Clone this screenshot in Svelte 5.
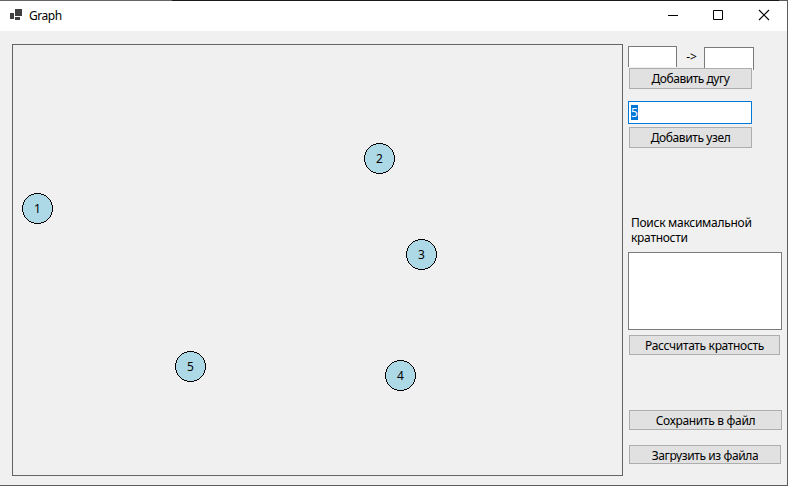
<script>
  const nodes = [
    { id: 1, x: 9, y: 148 },
    { id: 2, x: 351, y: 98 },
    { id: 3, x: 393, y: 194 },
    { id: 4, x: 372, y: 315 },
    { id: 5, x: 162, y: 306 }
  ];
</script>

<div class="window">
  <header>
    <svg class="logo" width="13" height="12" viewBox="0 0 13 12" shape-rendering="crispEdges" fill="#3f3f3f">
      <path d="M5 0h7v7H5zM0 4h4v6H0zM5 8h5v3H5z" />
    </svg>
    <span class="title">Graph</span>
    <div class="controls">
      <svg width="46" height="29" viewBox="0 0 46 29"><path d="M18 14.5h10" stroke="#000" /></svg>
      <svg width="46" height="29" viewBox="0 0 46 29"><path d="M17.5 9.5h9v9h-9z" fill="none" stroke="#000" /></svg>
      <svg width="45" height="29" viewBox="0 0 45 29"><path d="M17 9l10 10M27 9L17 19" stroke="#000" stroke-width="1.1" /></svg>
    </div>
  </header>
  <main>
    <div class="canvas">
      {#each nodes as n}
        <div class="node" style="left:{n.x}px;top:{n.y}px">
          <svg width="31" height="31" shape-rendering="crispEdges"><circle cx="15.5" cy="15.5" r="15" fill="#add8e6" stroke="#000" /></svg>
          <span>{n.id}</span>
        </div>
      {/each}
    </div>
    <aside>
      <div class="edge">
        <div class="field from"></div>
        <span>-&gt;</span>
        <div class="field to"></div>
      </div>
      <button class="add-edge"><span>Добавить дугу</span></button>
      <div class="name"><span class="sel">5</span></div>
      <button class="add-node"><span>Добавить узел</span></button>
      <p>Поиск максимальной<br />кратности</p>
      <div class="result"></div>
      <button class="calc"><span>Рассчитать кратность</span></button>
      <button class="save"><span>Сохранить в файл</span></button>
      <button class="load"><span>Загрузить из файла</span></button>
    </aside>
  </main>
</div>

<style>
  .window {
    box-sizing: border-box;
    width: 788px;
    height: 486px;
    padding-top: 1px;
    background: linear-gradient(90deg, #646464 172px, #1b191b 172px, #1b191b 779px, #5c5c5c 779px) 0 0 / 100% 1px no-repeat #f0f0f0;
    border: solid #5c5c5c;
    border-width: 0 1px 1px 0;
    font: 12px/15px "Noto Sans", "Open Sans", sans-serif;
    color: #000;
    overflow: hidden;
  }
  header {
    display: flex;
    height: 30px;
    background: #fff;
  }
  .logo { margin: 8px 0 0 10px; }
  .title { margin: 7px 0 0 6px; letter-spacing: -0.45px; }
  .controls { display: flex; margin: 0 0 0 auto; }
  .controls svg { display: block; }
  main { display: flex; padding: 13px 0 0 12px; }
  .canvas {
    position: relative;
    box-sizing: border-box;
    flex: none;
    width: 611px;
    height: 432px;
    border: 1px solid #646464;
  }
  .node { position: absolute; width: 31px; height: 31px; }
  .node svg { display: block; }
  .node span {
    position: absolute;
    inset: 8px 0 0 0;
    text-align: center;
  }
  aside {
    display: flex;
    flex-direction: column;
    align-items: flex-start;
    padding: 2px 0 0 5px;
    width: 154px;
  }
  .edge { display: flex; height: 22px; }
  .edge span {
    box-sizing: border-box;
    width: 27px;
    padding-left: 2px;
    text-align: center;
    margin-top: 3px;
  }
  .field {
    box-sizing: border-box;
    background: #fff;
    border: 1px solid #7a7a7a;
    border-bottom: 0;
  }
  .from { width: 49px; height: 21px; }
  .to { width: 50px; height: 23px; margin-top: 1px; }
  button {
    box-sizing: border-box;
    flex: none;
    margin: 0 0 0 1px;
    padding: 0;
    display: flex;
    justify-content: center;
    align-items: center;
    width: 123px;
    height: 21px;
    background: #e1e1e1;
    border: 1px solid #adadad;
    font: inherit;
    color: inherit;
    white-space: nowrap;
    overflow: hidden;
  }
  .add-edge { letter-spacing: -0.46px; }
  .add-node { letter-spacing: -0.4px; }
  .name {
    box-sizing: border-box;
    width: 124px;
    height: 23px;
    margin: 12px 0 3px;
    padding: 3px 2px;
    background: #fff;
    border: 1px solid #0078d7;
    display: flex;
  }
  .sel { width: 7px; height: 15px; background: #0078d7; color: #fff; line-height: 15px; }
  p { margin: 67px 0 0 3px; height: 37px; white-space: nowrap; letter-spacing: -0.28px; }
  .result {
    box-sizing: border-box;
    width: 154px;
    height: 78px;
    background: #fff;
    border: 1px solid #7a7a7a;
  }
  .calc { width: 151px; height: 20px; margin-top: 5px; letter-spacing: -0.33px; }
  .save { width: 153px; height: 20px; margin-top: 55px; letter-spacing: -0.32px; }
  .load { width: 152px; height: 19px; margin-top: 15px; letter-spacing: -0.4px; }
  .load span { height: 14px; overflow: hidden; }
</style>
